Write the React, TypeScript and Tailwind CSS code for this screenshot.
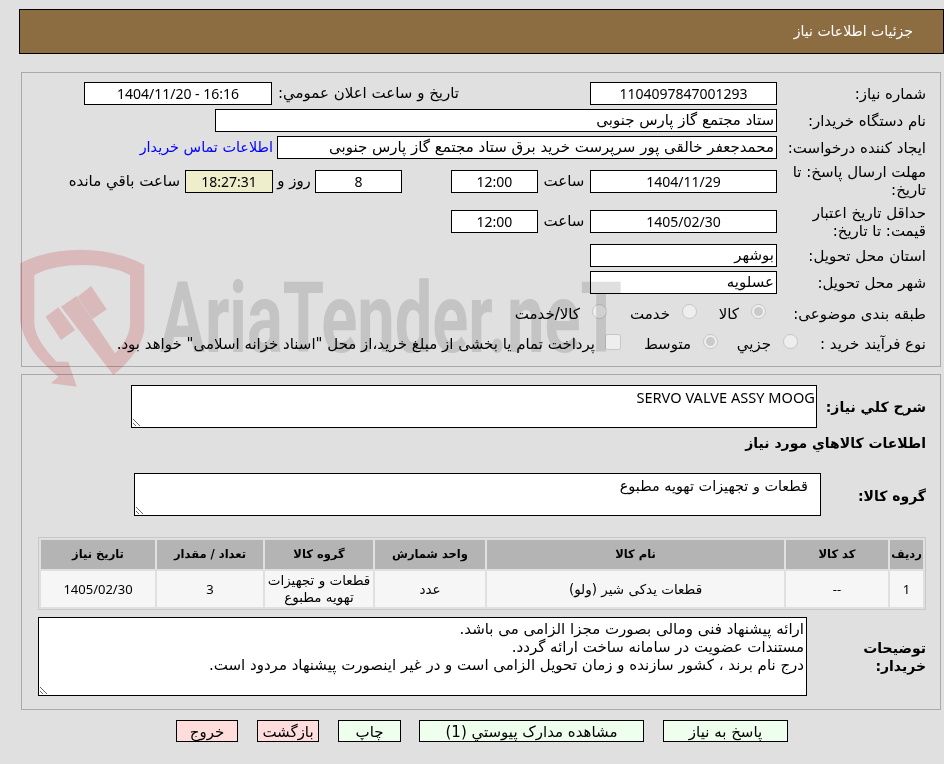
import React from "react";

const latin = "font-['Noto_Sans',sans-serif] text-[14px]";

const Field = ({ value, className = "" }: { value: string; className?: string }) => (
  <div className={`h-[23px] bg-white border border-black leading-[21px] px-[2px] whitespace-nowrap overflow-hidden ${className}`}>
    {value}
  </div>
);

const Row = ({ label, height, children }: { label: string; height: string; children?: React.ReactNode }) => (
  <div className={`flex items-center ${height}`}>
    <div className="w-[149px] shrink-0 pl-[6px] leading-[18px]">{label}</div>
    {children}
  </div>
);

const Radio = ({ label, checked, className = "" }: { label: string; checked?: boolean; className?: string }) => (
  <span className={`flex items-center ${className}`}>
    <input type="radio" disabled checked={!!checked} readOnly className="w-[15px] h-[15px] m-0 -mt-[5px] shrink-0" />
    <span className="mr-[12px]">{label}</span>
  </span>
);

// sits over the page content, the fields and panel lines show through it
const Watermark = () => (
  <>
    <svg className="absolute left-[15px] top-[240px] pointer-events-none mix-blend-multiply" width="200" height="160" viewBox="0 0 600 480">
      <path
        d="M15 70 C120 15 280 15 388 75 L388 270 C380 320 340 370 295 405 L138 200 L185 168 L300 340 C330 310 345 280 345 250 L345 105 C270 65 130 65 58 105 L58 250 C60 290 90 330 125 365 L160 365 L185 440 L108 430 L130 410 C70 360 25 310 15 240 Z"
        fill="#f9d3d5"
      />
      <path d="M92 230 L130 202 L180 270 L138 300 Z" fill="#f9d3d5" />
      <path d="M188 170 L228 138 L275 208 L232 238 Z" fill="#f9d3d5" />
    </svg>
    <svg className="absolute left-[155px] top-[262px] pointer-events-none mix-blend-multiply" width="480" height="100" viewBox="0 0 480 100">
      <text
        x="5"
        y="90"
        direction="ltr"
        fontFamily="Roboto, sans-serif"
        fontWeight="700"
        fontSize="98"
        fill="#dfdfdf"
        textLength="462"
        lengthAdjust="spacingAndGlyphs"
      >
        AriaTender.neT
      </text>
    </svg>
  </>
);

const columns = [
  { title: "ردیف", w: "w-[33px]" },
  { title: "کد کالا", w: "w-[102px]" },
  { title: "نام کالا", w: "w-[297px]" },
  { title: "واحد شمارش", w: "w-[110px]" },
  { title: "گروه کالا", w: "w-[108px]" },
  { title: "تعداد / مقدار", w: "w-[106px]" },
  { title: "تاریخ نیاز", w: "w-[114px]" },
];

const cells = [
  { text: "1", en: true },
  { text: "--", en: true },
  { text: "قطعات یدکی شیر (ولو)" },
  { text: "عدد" },
  { text: "قطعات و تجهیزات تهویه مطبوع" },
  { text: "3", en: true },
  { text: "1405/02/30", en: true },
];

const App: React.FC = () => {
  return (
    <div
      dir="rtl"
      className="relative w-[944px] h-[764px] overflow-hidden bg-[#e0e0e0] text-[15px] text-black pt-[9px]"
      style={{ fontFamily: '"DejaVu Sans", sans-serif' }}
    >
      <div className="relative ml-[19px] h-[45px] bg-[#8c6d42] border border-black flex items-center pr-[30px] text-white text-[14px]">
        جزئیات اطلاعات نیاز
      </div>

      {/* top panel */}
      <div className="relative ml-[21px] mr-[3px] mt-[18px] h-[295px] border border-[#a9a9a9] pt-[7px] pr-[14px]">
        <Row label="شماره نیاز:" height="h-[27px]">
          <Field value="1104097847001293" className={`w-[187px] text-center ${latin}`} />
          <div className="w-[182px] mr-[131px] ml-[5px] whitespace-nowrap">تاریخ و ساعت اعلان عمومي:</div>
          <Field value="16:16 - 1404/11/20" className={`w-[188px] text-center ${latin}`} />
        </Row>
        <Row label="نام دستگاه خریدار:" height="h-[27px]">
          <Field value="ستاد مجتمع گاز پارس جنوبی" className="w-[562px]" />
        </Row>
        <Row label="ایجاد کننده درخواست:" height="h-[27px]">
          <Field value="محمدجعفر خالقی پور سرپرست خرید برق ستاد مجتمع گاز پارس جنوبی" className="w-[500px]" />
          <a className="mr-[4px] text-[#0000ff] text-[14.4px] whitespace-nowrap">اطلاعات تماس خریدار</a>
        </Row>
        <Row label="مهلت ارسال پاسخ: تا تاریخ:" height="h-[40px]">
          <Field value="1404/11/29" className={`w-[187px] text-center ${latin}`} />
          <span className="w-[52px] text-center">ساعت</span>
          <Field value="12:00" className={`w-[87px] text-center ${latin}`} />
          <Field value="8" className={`w-[87px] mr-[49px] text-center ${latin}`} />
          <span className="w-[42px] text-center whitespace-nowrap">روز و</span>
          <Field value="18:27:31" className={`w-[88px] text-center !bg-[#eeeecc] ${latin}`} />
          <span className="mr-[5px] whitespace-nowrap">ساعت باقي مانده</span>
        </Row>
        <Row label="حداقل تاریخ اعتبار قیمت: تا تاریخ:" height="h-[41px]">
          <Field value="1405/02/30" className={`w-[187px] text-center ${latin}`} />
          <span className="w-[52px] text-center">ساعت</span>
          <Field value="12:00" className={`w-[87px] text-center ${latin}`} />
        </Row>
        <Row label="استان محل تحویل:" height="h-[27px]">
          <Field value="بوشهر" className="w-[187px]" />
        </Row>
        <Row label="شهر محل تحویل:" height="h-[27px]">
          <Field value="عسلویه" className="w-[187px]" />
        </Row>
        <Row label="طبقه بندی موضوعی:" height="h-[36px]">
          <div className="flex mr-[11px] whitespace-nowrap">
            <Radio label="کالا" checked className="w-[69px]" />
            <Radio label="خدمت" className="w-[90px]" />
            <Radio label="کالا/خدمت" />
          </div>
        </Row>
        <Row label="نوع فرآیند خرید :" height="h-[24px]">
          <div className="flex mr-[-21px] items-center whitespace-nowrap">
            <Radio label="جزیي" className="w-[80px]" />
            <Radio label="متوسط" checked className="w-[97px]" />
            <input type="checkbox" disabled className="w-[16px] h-[16px] m-0 -mt-[5px]" />
            <span className="mr-[10px]">پرداخت تمام یا بخشی از مبلغ خرید،از محل "اسناد خزانه اسلامی" خواهد بود.</span>
          </div>
        </Row>
      </div>

      {/* details panel */}
      <div className="relative ml-[21px] mr-[3px] mt-[7px] h-[336px] border border-[#a9a9a9] pr-[14px] pt-[10px]">
        <div className="flex">
          <div className="w-[109px] shrink-0 pt-[12px] text-[14px] leading-[20px] font-bold whitespace-nowrap">شرح کلي نیاز:</div>
          <textarea
            readOnly
            dir="rtl"
            value="SERVO VALVE ASSY MOOG"
            className="block w-[686px] h-[43px] bg-white border border-black outline-none px-[1px] py-[3px] leading-[17px] font-['Noto_Sans',sans-serif] text-[14.6px]"
          />
        </div>
        <div className="mt-[3px] text-[14px] font-bold leading-[24px]">اطلاعات کالاهاي مورد نیاز</div>
        <div className="flex mt-[18px]">
          <div className="w-[105px] shrink-0 pt-[13px] text-[14px] leading-[20px] font-bold">گروه کالا:</div>
          <textarea
            readOnly
            dir="rtl"
            value="قطعات و تجهیزات تهویه مطبوع"
            className="block w-[687px] h-[43px] bg-white border border-black outline-none pr-[12px] py-[4px] leading-[17px] text-[14.4px]"
          />
        </div>
        <table className="table-fixed border-separate border-spacing-[2px] border border-[#c8c8c8] w-[888px] mt-[21px] text-[13.5px]">
          <thead>
            <tr>
              {columns.map((c) => (
                <th key={c.title} className={`${c.w} h-[29px] bg-[#b4b4b4] font-bold text-[11.5px] p-0 text-center`}>
                  {c.title}
                </th>
              ))}
            </tr>
          </thead>
          <tbody>
            <tr>
              {cells.map((c, i) => (
                <td
                  key={i}
                  className={`h-[36px] bg-[#f6f6f6] text-center p-0 px-[2px] leading-[17px] ${c.en ? "font-['Noto_Sans',sans-serif] text-[13px]" : ""}`}
                >
                  {c.text}
                </td>
              ))}
            </tr>
          </tbody>
        </table>
        <div className="flex mt-[7px]">
          <div className="w-[119px] shrink-0 pl-[30px] pt-[22px] text-[14px] font-bold leading-[18px]">توضیحات خریدار:</div>
          <textarea
            readOnly
            dir="rtl"
            value={"ارائه پیشنهاد فنی ومالی بصورت مجزا الزامی می باشد.\nمستندات عضویت در سامانه ساخت ارائه گردد.\nدرج نام برند ، کشور سازنده و زمان تحویل الزامی است و در غیر اینصورت پیشنهاد مردود است."}
            className="block w-[769px] h-[79px] bg-white border border-black outline-none px-[2px] py-[2px] leading-[18px]"
          />
        </div>
      </div>

      {/* actions */}
      <div className="relative flex mt-[10px] mr-[156px] gap-[19px]">
        <button className="w-[125px] h-[22px] bg-[#eeffee] border border-black">پاسخ به نیاز</button>
        <button className="w-[225px] h-[22px] bg-[#eeffee] border border-black">مشاهده مدارک پیوستي (1)</button>
        <button className="w-[63px] h-[22px] -mr-px bg-[#eeffee] border border-black">چاپ</button>
        <button className="w-[62px] h-[22px] bg-[#ffdddd] border border-black">بازگشت</button>
        <button className="w-[62px] h-[22px] bg-[#ffdddd] border border-black">خروج</button>
      </div>

      <Watermark />
    </div>
  );
};

export default App;
